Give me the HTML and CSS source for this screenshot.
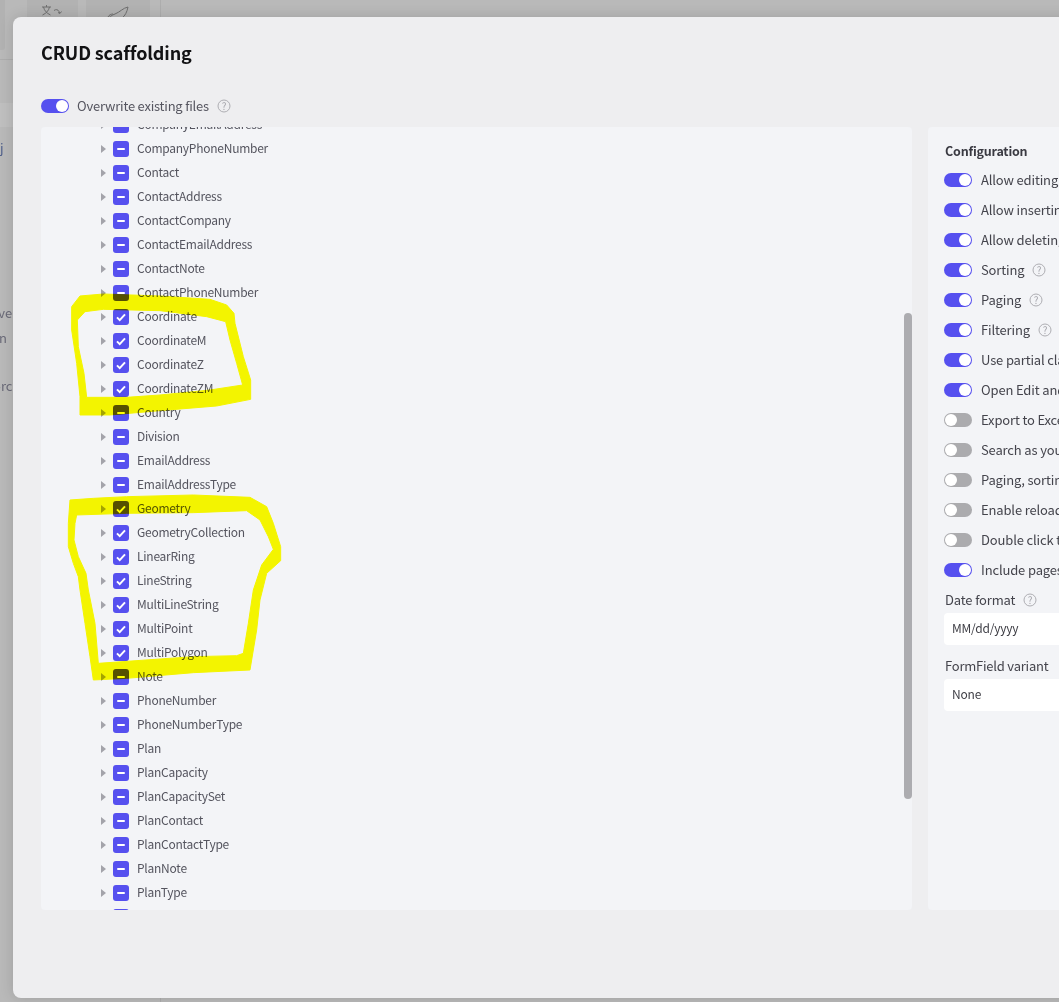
FILE: index.html
```html
<!DOCTYPE html>
<html lang="en">
<head>
<meta charset="utf-8">
<title>CRUD scaffolding</title>
<link rel="stylesheet" href="styles.css">
</head>
<body>
<svg width="0" height="0" class="defs">
  <symbol id="minus" viewBox="0 0 16 16"><rect x="4" y="7" width="8" height="2" rx="1" fill="#fff"/></symbol>
  <symbol id="check" viewBox="0 0 16 16"><path d="M4 8.400l2.700 2.700L12 5.300" fill="none" stroke="#fff" stroke-width="2"/></symbol>
  <symbol id="caret" viewBox="0 0 5 8"><path d="M0 0l5 4-5 4z" fill="#a3a3aa"/></symbol>
  <symbol id="help" viewBox="0 0 14 14"><circle cx="7" cy="7" r="6" fill="none" stroke="#aeaeb3"/><text x="7" y="10.500" text-anchor="middle" font-size="10" fill="#a6a6ac" font-family="Noto Sans CJK SC, sans-serif">?</text></symbol>
</svg>

<div class="backdrop">
  <header class="bg-top">
    <div class="bg-tile bg-tile-edge"></div>
    <div class="bg-tile bg-tile-a">
      <svg class="bg-icon" width="24" height="16" viewBox="0 0 24 16"><path d="M1 3h9M5.500 1v2M2.500 3c1 4 3 6 7 8M8.500 3c-1 4-3 6-7 8M13 6.500c2-1.500 4-1 5 1l1 1.500M17 8.500l2 1 1.500-2" fill="none" stroke="#6f6f6f" stroke-width="1"/></svg>
    </div>
    <div class="bg-tile bg-tile-b">
      <svg class="bg-icon" width="26" height="18" viewBox="0 0 26 18"><path d="M2 16c2-3 5-5 8-6 5-2 8-6 13-7-1 5-3 9-6 11l-3 3M8 10c-2 0-4 1-5 3M5 15a2 2 0 1 0 4 0" fill="none" stroke="#6f6f6f" stroke-width="1"/></svg>
    </div>
  </header>
  <div class="bg-body">
    <div class="bg-band"></div>
    <div class="bg-line">j</div>
    <div class="bg-text bg-eve">eve</div>
    <div class="bg-text bg-on">on</div>
    <div class="bg-text bg-orc">orc</div>
  </div>
</div>

<main class="modal">
  <h1 class="title">CRUD scaffolding</h1>
  <div class="overwrite">
    <span class="toggle on"></span>
    <span class="overwrite-label">Overwrite existing files</span>
    <svg class="help"><use href="#help"/></svg>
  </div>
  <div class="columns">
    <section class="tree">
      <ul class="tree-list">
        <li class="row"><svg class="caret"><use href="#caret"/></svg><span class="box"><svg class="mark"><use href="#minus"/></svg></span>CompanyEmailAddress</li>
        <li class="row"><svg class="caret"><use href="#caret"/></svg><span class="box"><svg class="mark"><use href="#minus"/></svg></span>CompanyPhoneNumber</li>
        <li class="row"><svg class="caret"><use href="#caret"/></svg><span class="box"><svg class="mark"><use href="#minus"/></svg></span>Contact</li>
        <li class="row"><svg class="caret"><use href="#caret"/></svg><span class="box"><svg class="mark"><use href="#minus"/></svg></span>ContactAddress</li>
        <li class="row"><svg class="caret"><use href="#caret"/></svg><span class="box"><svg class="mark"><use href="#minus"/></svg></span>ContactCompany</li>
        <li class="row"><svg class="caret"><use href="#caret"/></svg><span class="box"><svg class="mark"><use href="#minus"/></svg></span>ContactEmailAddress</li>
        <li class="row"><svg class="caret"><use href="#caret"/></svg><span class="box"><svg class="mark"><use href="#minus"/></svg></span>ContactNote</li>
        <li class="row"><svg class="caret"><use href="#caret"/></svg><span class="box"><svg class="mark"><use href="#minus"/></svg></span>ContactPhoneNumber</li>
        <li class="row"><svg class="caret"><use href="#caret"/></svg><span class="box"><svg class="mark"><use href="#check"/></svg></span>Coordinate</li>
        <li class="row"><svg class="caret"><use href="#caret"/></svg><span class="box"><svg class="mark"><use href="#check"/></svg></span>CoordinateM</li>
        <li class="row"><svg class="caret"><use href="#caret"/></svg><span class="box"><svg class="mark"><use href="#check"/></svg></span>CoordinateZ</li>
        <li class="row"><svg class="caret"><use href="#caret"/></svg><span class="box"><svg class="mark"><use href="#check"/></svg></span>CoordinateZM</li>
        <li class="row"><svg class="caret"><use href="#caret"/></svg><span class="box"><svg class="mark"><use href="#minus"/></svg></span>Country</li>
        <li class="row"><svg class="caret"><use href="#caret"/></svg><span class="box"><svg class="mark"><use href="#minus"/></svg></span>Division</li>
        <li class="row"><svg class="caret"><use href="#caret"/></svg><span class="box"><svg class="mark"><use href="#minus"/></svg></span>EmailAddress</li>
        <li class="row"><svg class="caret"><use href="#caret"/></svg><span class="box"><svg class="mark"><use href="#minus"/></svg></span>EmailAddressType</li>
        <li class="row"><svg class="caret"><use href="#caret"/></svg><span class="box"><svg class="mark"><use href="#check"/></svg></span>Geometry</li>
        <li class="row"><svg class="caret"><use href="#caret"/></svg><span class="box"><svg class="mark"><use href="#check"/></svg></span>GeometryCollection</li>
        <li class="row"><svg class="caret"><use href="#caret"/></svg><span class="box"><svg class="mark"><use href="#check"/></svg></span>LinearRing</li>
        <li class="row"><svg class="caret"><use href="#caret"/></svg><span class="box"><svg class="mark"><use href="#check"/></svg></span>LineString</li>
        <li class="row"><svg class="caret"><use href="#caret"/></svg><span class="box"><svg class="mark"><use href="#check"/></svg></span>MultiLineString</li>
        <li class="row"><svg class="caret"><use href="#caret"/></svg><span class="box"><svg class="mark"><use href="#check"/></svg></span>MultiPoint</li>
        <li class="row"><svg class="caret"><use href="#caret"/></svg><span class="box"><svg class="mark"><use href="#check"/></svg></span>MultiPolygon</li>
        <li class="row"><svg class="caret"><use href="#caret"/></svg><span class="box"><svg class="mark"><use href="#minus"/></svg></span>Note</li>
        <li class="row"><svg class="caret"><use href="#caret"/></svg><span class="box"><svg class="mark"><use href="#minus"/></svg></span>PhoneNumber</li>
        <li class="row"><svg class="caret"><use href="#caret"/></svg><span class="box"><svg class="mark"><use href="#minus"/></svg></span>PhoneNumberType</li>
        <li class="row"><svg class="caret"><use href="#caret"/></svg><span class="box"><svg class="mark"><use href="#minus"/></svg></span>Plan</li>
        <li class="row"><svg class="caret"><use href="#caret"/></svg><span class="box"><svg class="mark"><use href="#minus"/></svg></span>PlanCapacity</li>
        <li class="row"><svg class="caret"><use href="#caret"/></svg><span class="box"><svg class="mark"><use href="#minus"/></svg></span>PlanCapacitySet</li>
        <li class="row"><svg class="caret"><use href="#caret"/></svg><span class="box"><svg class="mark"><use href="#minus"/></svg></span>PlanContact</li>
        <li class="row"><svg class="caret"><use href="#caret"/></svg><span class="box"><svg class="mark"><use href="#minus"/></svg></span>PlanContactType</li>
        <li class="row"><svg class="caret"><use href="#caret"/></svg><span class="box"><svg class="mark"><use href="#minus"/></svg></span>PlanNote</li>
        <li class="row"><svg class="caret"><use href="#caret"/></svg><span class="box"><svg class="mark"><use href="#minus"/></svg></span>PlanType</li>
        <li class="row"><svg class="caret"><use href="#caret"/></svg><span class="box"><svg class="mark"><use href="#minus"/></svg></span></li>
      </ul>
      <div class="scrollbar"></div>
    </section>
    <aside class="config">
      <h2 class="config-title">Configuration</h2>
      <div class="opt"><span class="toggle on"></span><span class="opt-text">Allow editing</span></div>
      <div class="opt"><span class="toggle on"></span><span class="opt-text">Allow inserting</span></div>
      <div class="opt"><span class="toggle on"></span><span class="opt-text">Allow deleting</span></div>
      <div class="opt"><span class="toggle on"></span><span class="opt-text">Sorting</span><svg class="help"><use href="#help"/></svg></div>
      <div class="opt"><span class="toggle on"></span><span class="opt-text">Paging</span><svg class="help"><use href="#help"/></svg></div>
      <div class="opt"><span class="toggle on"></span><span class="opt-text">Filtering</span><svg class="help"><use href="#help"/></svg></div>
      <div class="opt"><span class="toggle on"></span><span class="opt-text">Use partial classes</span></div>
      <div class="opt"><span class="toggle on"></span><span class="opt-text">Open Edit and Insert in dialog</span></div>
      <div class="opt"><span class="toggle"></span><span class="opt-text">Export to Excel</span></div>
      <div class="opt"><span class="toggle"></span><span class="opt-text">Search as you type</span></div>
      <div class="opt"><span class="toggle"></span><span class="opt-text">Paging, sorting and filtering</span></div>
      <div class="opt"><span class="toggle"></span><span class="opt-text">Enable reload</span></div>
      <div class="opt"><span class="toggle"></span><span class="opt-text">Double click to edit</span></div>
      <div class="opt"><span class="toggle on"></span><span class="opt-text">Include pages</span></div>
      <div class="field-label field-date"><span class="opt-text">Date format</span><svg class="help"><use href="#help"/></svg></div>
      <div class="input">MM/dd/yyyy</div>
      <div class="field-label field-variant"><span class="opt-text">FormField variant</span></div>
      <div class="input">None</div>
    </aside>
  </div>
</main>

<svg class="marker" width="1059" height="1002" viewBox="0 0 1059 1002">
  <g transform="translate(60 280) scale(.33333)">
    <path class="ink" fill-rule="evenodd" d="M35 80L60 48 130 42 300 48 450 58 500 75 522 100 525 130 550 230 572 300 572 358 470 378 300 392 150 405 60 405 60 350 50 250 35 150ZM52 120L75 95 130 88 300 92 440 110 497 125 510 180 530 250 548 315 450 330 300 345 200 352 80 352 72 280 55 200Z"/>
  </g>
  <g transform="translate(60 490) scale(.33333)">
    <path class="ink" fill-rule="evenodd" d="M30 30L100 25 200 20 400 15 570 22 620 50 640 100 662 170 662 212 620 250 600 330 590 420 570 540 400 548 200 565 100 570 90 500 75 400 60 300 55 260 40 220 25 170 25 100ZM50 75L200 70 400 68 560 62 600 90 625 140 640 178 605 225 580 300 565 400 550 490 530 497 400 500 115 520 105 400 85 300 78 250 55 200 42 150 45 100Z"/>
  </g>
</svg>
</body>
</html>
```

FILE: styles.css
```css
* { box-sizing: border-box; }
html, body { margin: 0; height: 100%; }
body {
  position: relative;
  width: 1059px;
  height: 1002px;
  overflow: hidden;
  background: #b9b9b9;
  font-family: "Noto Sans CJK SC", "Noto Sans", sans-serif;
  font-size: 13px;
  color: #55555f;
}
.defs { position: absolute; }

/* dimmed page behind the dialog */
.backdrop { position: relative; height: 100%; }
.backdrop::after {
  content: "";
  position: absolute;
  left: 160px;
  top: 0;
  bottom: 0;
  width: 1px;
  background: #adadad;
}
.bg-top {
  display: flex;
  height: 60px;
  border-bottom: 1px solid #adadad;
}
.bg-tile { height: 50px; background: #b2b2b2; display: flex; justify-content: center; padding-top: 4px; }
.bg-tile-edge { width: 5px; border-radius: 0 0 3px 0; }
.bg-tile-a { width: 51px; margin-left: 22px; }
.bg-tile-b { width: 64px; margin-left: 8px; }
.bg-icon { display: block; }
.bg-body { font-size: 13px; color: #6a6a78; line-height: 20px; }
.bg-band { height: 24px; margin-top: 43px; background: #bfbfbf; }
.bg-line { margin-top: 11px; color: #4f5f8a; }
.bg-text { margin-left: -9px; height: 20px; }
.bg-eve { margin-top: 145px; }
.bg-on { margin-top: 5px; }
.bg-orc { margin-top: 28px; margin-left: -7px; }

/* dialog */
.modal {
  position: absolute;
  left: 13px;
  top: 17px;
  width: 1400px;
  height: 981px;
  padding: 0 28px;
  background: #eeeef0;
  border-radius: 8px;
  box-shadow: 0 0 14px rgba(0, 0, 0, .14);
}
.title {
  margin: 0;
  padding-top: 21px;
  height: 70px;
  font-size: 18px;
  line-height: 28px;
  font-weight: 700;
  letter-spacing: -.13px;
  color: #121214;
}
.overwrite {
  display: flex;
  align-items: center;
  height: 40px;
  padding-bottom: 2px;
  font-size: 13px;
  letter-spacing: -.22px;
}
.overwrite .toggle { margin-right: 8px; }
.overwrite-label { padding-bottom: 2px; }
.help { width: 14px; height: 14px; margin-left: 8px; flex: none; }

.toggle {
  position: relative;
  flex: none;
  width: 28px;
  height: 14px;
  border-radius: 7px;
  background: #ababae;
  display: inline-block;
}
.toggle::after {
  content: "";
  position: absolute;
  top: 1px;
  left: 1px;
  width: 12px;
  height: 12px;
  border-radius: 50%;
  background: #fff;
}
.toggle.on { background: #5650ef; }
.toggle.on::after { left: 15px; }

.columns {
  display: flex;
  gap: 16px;
  height: 783px;
}
.tree {
  position: relative;
  flex: none;
  width: 871px;
  height: 100%;
  overflow: hidden;
  background: #f3f4f7;
  border-radius: 4px;
}
.tree-list {
  list-style: none;
  margin: -15px 0 0;
  padding: 0 0 0 60px;
}
.row {
  display: flex;
  align-items: center;
  height: 24px;
  line-height: 24px;
  font-size: 12px;
  letter-spacing: -.25px;
  white-space: nowrap;
}
.caret { width: 5px; height: 8px; margin: 2px 7px 0 0; flex: none; }
.box {
  flex: none;
  width: 16px;
  height: 16px;
  margin: 2px 8px 0 0;
  border-radius: 3px;
  background: #5650ef;
}
.mark { display: block; width: 16px; height: 16px; }
.scrollbar {
  position: absolute;
  right: 0;
  top: 186px;
  width: 8px;
  height: 486px;
  border-radius: 4px;
  background: #acacb0;
}

.config {
  flex: none;
  width: 440px;
  height: 100%;
  padding: 12px 16px 0;
  background: #f3f4f7;
  border-radius: 4px;
  white-space: nowrap;
}
.config-title {
  margin: 0;
  height: 26px;
  padding-left: 1px;
  font-size: 12.500px;
  line-height: 24px;
  font-weight: 700;
  letter-spacing: -.2px;
  color: #3a3a42;
}
.opt {
  display: flex;
  align-items: center;
  height: 30px;
  color: #44444c;
}
.opt .toggle { margin-right: 9px; }
.opt-text { padding-bottom: 2px; letter-spacing: -.15px; }
.field-label {
  display: flex;
  align-items: center;
  padding-left: 1px;
  color: #44444c;
}
.field-date { height: 28px; padding-top: 2px; }
.field-variant { height: 34px; padding-top: 8px; }
.field-variant .opt-text { letter-spacing: -.22px; }
.input {
  width: 360px;
  height: 32px;
  padding-left: 8px;
  line-height: 30px;
  font-size: 12px;
  letter-spacing: -.2px;
  color: #3f3f46;
  background: #fff;
  border-radius: 4px;
}

/* hand-drawn highlighter over the screenshot */
.marker {
  position: absolute;
  left: 0;
  top: 0;
  mix-blend-mode: multiply;
  pointer-events: none;
}
.ink {
  fill: #ffff00;
  stroke: #ffff00;
  stroke-width: 3;
  stroke-linejoin: round;
}
```
